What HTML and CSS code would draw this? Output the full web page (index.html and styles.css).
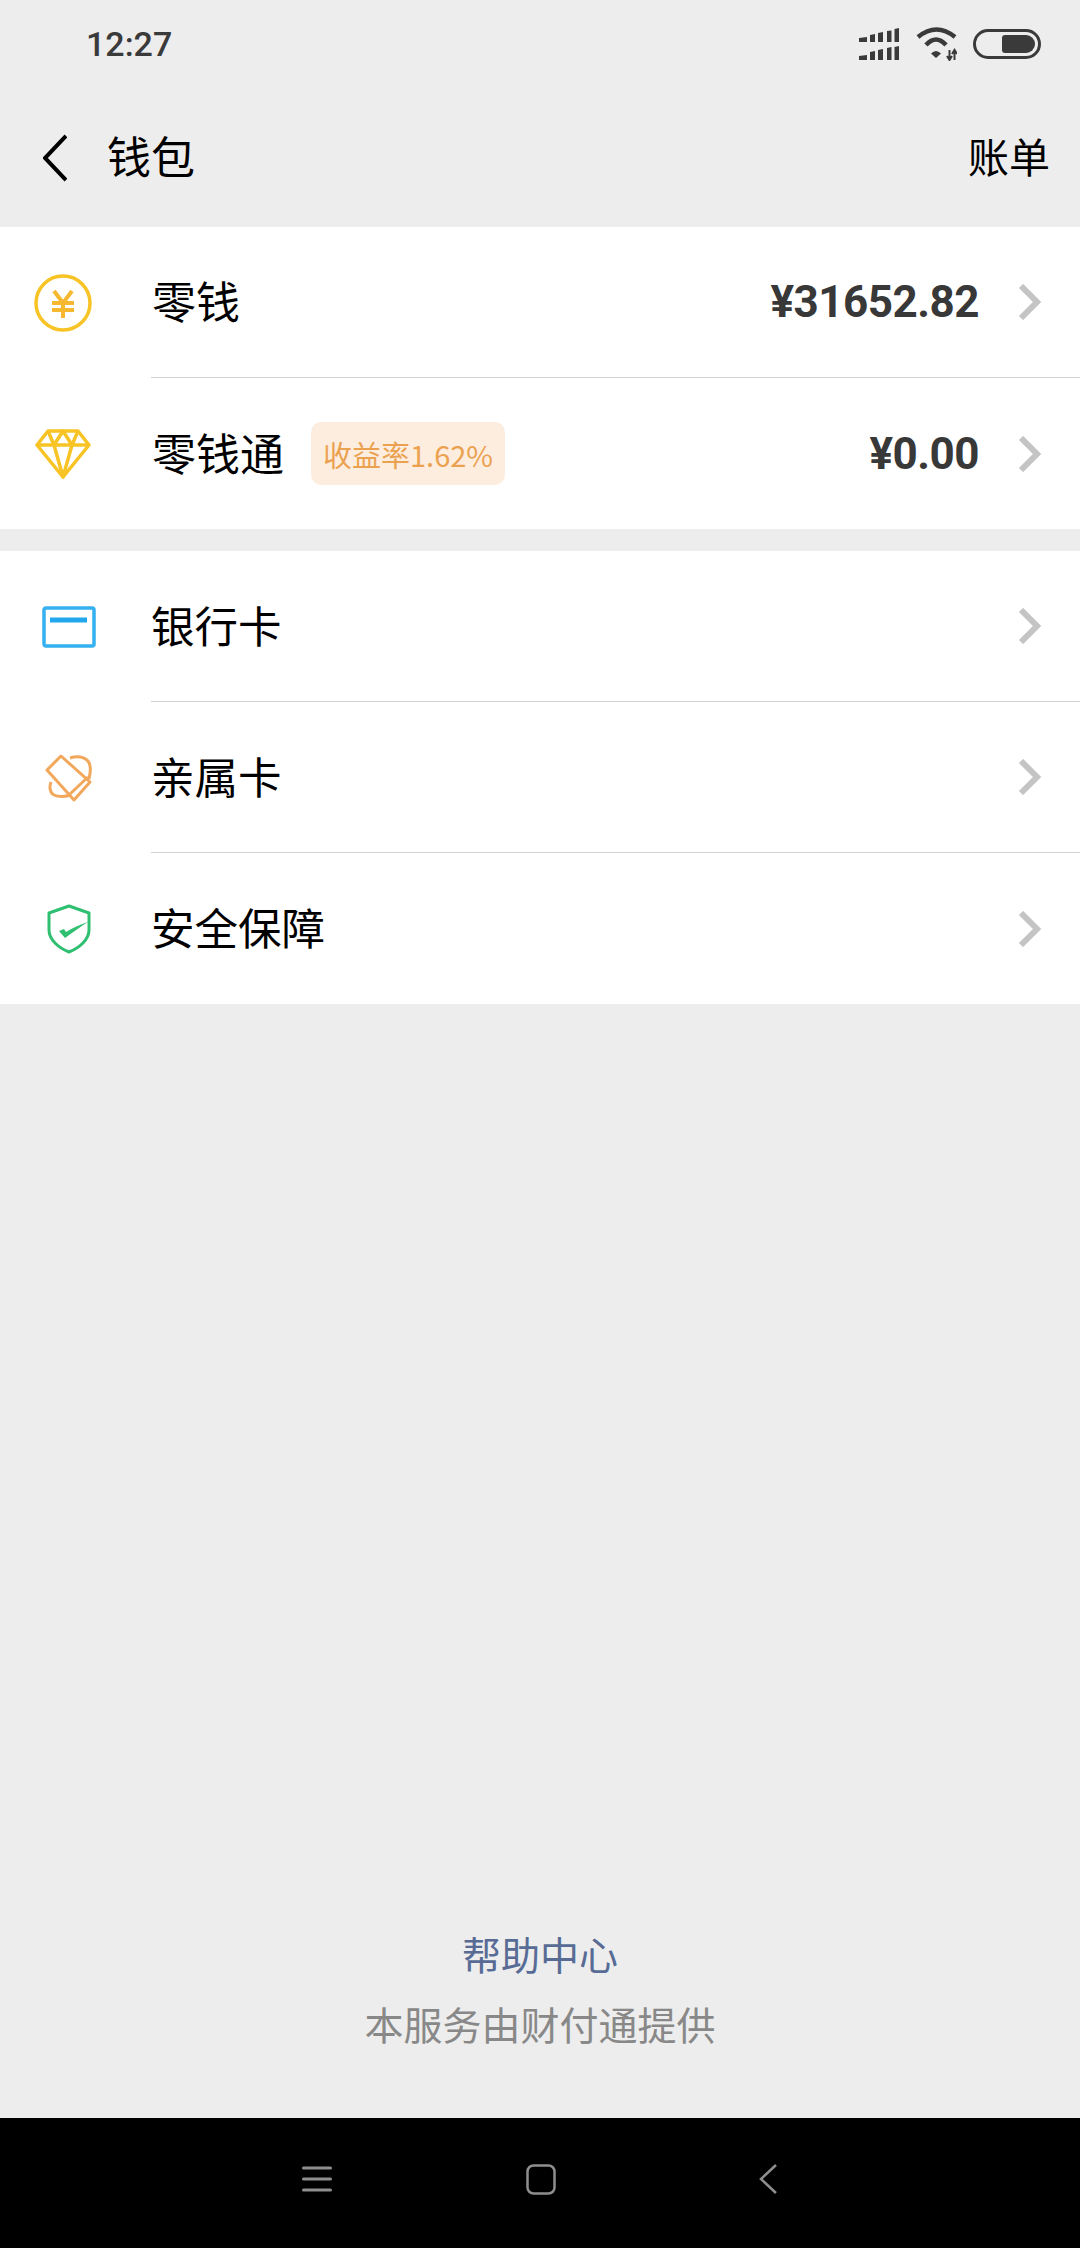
FILE: index.html
```html
<!DOCTYPE html>
<html lang="zh">
<head>
<meta charset="utf-8">
<title>钱包</title>
<link rel="stylesheet" href="styles.css">
</head>
<body>
<div class="page">
	<div class="status">
		<span class="time">12:27</span>
		<div class="status-icons">
			<svg width="40" height="32" viewBox="0 0 40 32" fill="#3a3a3a">
				<path d="M0 10l8-1v5H0zM11 7l5-1v8h-5zM19 5l5-1v10h-5zM28 3l4.500-.5V14H28zM35.500 1L40 0v14h-4.500z"/>
				<path d="M0 28l8-1v5H0zM11 24l5-1v9h-5zM19 22l5-1v11h-5zM28 20l4.500-1v13H28zM35.500 19l4.500-1v14h-4.500z"/>
			</svg>
			<svg width="42" height="34" viewBox="0 0 42 34" fill="none" stroke="#3a3a3a" stroke-width="4.500">
				<path d="M3 10Q21.500-5 40 10"/>
				<path d="M11 18Q21 7 31 18"/>
				<path d="M21 31l-5-4.500q5-5 10 0z" fill="#3a3a3a" stroke="none"/>
				<path d="M34.500 23v10M32 29l2.500 4 2.500-4M39.500 23v10M37 27l2.500-4 2.500 4" stroke-width="2"/>
			</svg>
			<div class="battery"><div class="battery-fill"></div></div>
		</div>
	</div>

	<div class="header">
		<svg class="back" width="24" height="48" viewBox="0 0 24 48" fill="none" stroke="#000" stroke-width="4">
			<path d="M23 2L2 24l21 22"/>
		</svg>
		<span class="header-title">钱包</span>
		<span class="header-action">账单</span>
	</div>

	<div class="group group-money">
		<div class="row">
			<div class="icon">
				<svg width="58" height="58" viewBox="0 0 58 58" fill="none" stroke="#f7c325">
					<circle cx="29" cy="29" r="27" stroke-width="3.500"/>
					<path d="M20 17l9 12 9-12M18 29h22M18 36h22M29 29v15" stroke-width="4" stroke="#f5b82e"/>
				</svg>
			</div>
			<div class="body">
				<span class="label">零钱</span>
				<span class="amount">¥31652.82</span>
				<svg class="chevron" width="24" height="36" viewBox="0 0 24 36" fill="none" stroke="#c4c4c4" stroke-width="6"><path d="M3 2l16 16L3 34"/></svg>
			</div>
		</div>
		<div class="row">
			<div class="icon">
				<svg width="56" height="50" viewBox="0 0 56 50" fill="none" stroke="#f7c325" stroke-width="3.500" stroke-linejoin="round">
					<path d="M13 2h30l11 14-26 32L2 16z"/>
					<path d="M2 16h52M13 2l6 14 9 32 9-32 6-14M19 16l9-14 9 14"/>
				</svg>
			</div>
			<div class="body">
				<span class="label">零钱通</span>
				<span class="badge">收益率1.62%</span>
				<span class="amount">¥0.00</span>
				<svg class="chevron" width="24" height="36" viewBox="0 0 24 36" fill="none" stroke="#c4c4c4" stroke-width="6"><path d="M3 2l16 16L3 34"/></svg>
			</div>
		</div>
	</div>

	<div class="group group-cards">
		<div class="row">
			<div class="icon">
				<svg width="54" height="42" viewBox="0 0 54 42" fill="none">
					<rect x="2" y="2" width="50" height="38" rx="2" stroke="#35b1f0" stroke-width="3.500"/>
					<path d="M8 14h37" stroke="#22a7ee" stroke-width="5"/>
				</svg>
			</div>
			<div class="body">
				<span class="label">银行卡</span>
				<svg class="chevron" width="24" height="36" viewBox="0 0 24 36" fill="none" stroke="#c4c4c4" stroke-width="6"><path d="M3 2l16 16L3 34"/></svg>
			</div>
		</div>
		<div class="row">
			<div class="icon">
				<svg width="48" height="48" viewBox="0 0 48 48" fill="none" stroke="#f2a85c" stroke-width="3" stroke-linejoin="round">
					<path d="M16 2L2 16l27 30 16-18z"/>
					<path d="M25 40l18-17M25 4c10-3 19 0 20 8 1 4 0 8-1 13M6 28c-2 5-1 11 3 13 4 2 11 2 16 0"/>
				</svg>
			</div>
			<div class="body">
				<span class="label">亲属卡</span>
				<svg class="chevron" width="24" height="36" viewBox="0 0 24 36" fill="none" stroke="#c4c4c4" stroke-width="6"><path d="M3 2l16 16L3 34"/></svg>
			</div>
		</div>
		<div class="row">
			<div class="icon">
				<svg width="44" height="50" viewBox="0 0 44 50" fill="none" stroke="#2fbf71" stroke-width="3" stroke-linejoin="round">
					<path d="M22 2l20 7v17c0 10-10 18-20 22C12 44 2 36 2 26V9z"/>
					<path d="M12 27l5-2 2 3c6-4 13-7 22-10-8 5-15 10-23 16z" fill="#2fbf71" stroke="none"/>
				</svg>
			</div>
			<div class="body">
				<span class="label">安全保障</span>
				<svg class="chevron" width="24" height="36" viewBox="0 0 24 36" fill="none" stroke="#c4c4c4" stroke-width="6"><path d="M3 2l16 16L3 34"/></svg>
			</div>
		</div>
	</div>

	<div class="footer">
		<div class="help">帮助中心</div>
		<div class="provider">本服务由财付通提供</div>
	</div>

	<div class="nav">
		<svg width="30" height="26" viewBox="0 0 30 26" stroke="#8e8e8e" stroke-width="3" stroke-linecap="round"><path d="M1.500 2h27M1.500 13h27M1.500 24h27"/></svg>
		<svg width="30" height="31" viewBox="0 0 30 31" fill="none" stroke="#8e8e8e" stroke-width="2.500"><rect x="1.500" y="1.500" width="27" height="28" rx="6"/></svg>
		<svg class="nav-back" width="18" height="30" viewBox="0 0 18 30" fill="none" stroke="#8e8e8e" stroke-width="2.500"><path d="M17 1L2 15l15 14"/></svg>
	</div>
</div>
</body>
</html>
```

FILE: styles.css
```css
* {
	box-sizing: border-box;
}
body {
	margin: 0;
	background: #ededed;
	font-family: "Noto Sans CJK SC", "Noto Sans", sans-serif;
}
.page {
	display: flex;
	flex-direction: column;
	height: 2248px;
}

/* status bar */
.status {
	display: flex;
	align-items: center;
	justify-content: space-between;
	height: 88px;
	padding: 0 39px 0 86px;
}
.time {
	font-family: Roboto, sans-serif;
	font-size: 34px;
	font-weight: 500;
	color: #3a3a3a;
}
.status-icons {
	display: flex;
	align-items: center;
	gap: 16px;
}
.battery {
	display: flex;
	justify-content: flex-end;
	width: 68px;
	height: 30px;
	padding: 3px;
	border: 3px solid #3a3a3a;
	border-radius: 15px;
}
.battery-fill {
	width: 33px;
	height: 100%;
	background: #3a3a3a;
	border-radius: 3px 9px 9px 3px;
}

/* header */
.header {
	display: flex;
	align-items: center;
	height: 139px;
	padding: 0 30px 0 43px;
}
.header-title {
	margin-left: 40px;
	margin-bottom: 5px;
	font-size: 44px;
	color: #000;
}
.header-action {
	margin-left: auto;
	margin-bottom: 5px;
	font-size: 41px;
	color: #000;
}

/* list */
.group {
	background: #fff;
}
.group-cards {
	margin-top: 22px;
}
.row {
	display: flex;
	height: 151px;
}
.icon {
	display: flex;
	align-items: center;
	justify-content: center;
	flex: none;
}
.group-money .icon {
	width: 125px;
	margin-right: 26px;
}
.group-cards .icon {
	width: 138px;
	margin-right: 13px;
}
.body {
	display: flex;
	flex: 1;
	align-items: center;
	padding: 0 38px 0 1px;
	border-bottom: 1px solid #d2d2d2;
}
.row:last-child .body {
	border-bottom: 0;
}
.label {
	margin-bottom: 4px;
	font-size: 44px;
	color: #000;
}
.group-cards .label {
	margin-left: -1px;
	font-size: 43.5px;
}
.badge {
	display: flex;
	align-items: center;
	height: 63px;
	margin-left: 27px;
	padding: 0 12px;
	background: #fdeddf;
	border-radius: 10px;
	font-size: 29px;
	color: #eba250;
}
.amount {
	margin-left: auto;
	font-family: Roboto, sans-serif;
	font-size: 44px;
	font-weight: 700;
	letter-spacing: -0.5px;
	color: #383838;
}
.chevron {
	flex: none;
	margin-left: 39px;
}
.group-cards .chevron {
	margin-left: auto;
}

/* footer */
.footer {
	margin-top: auto;
	padding-bottom: 67px;
	text-align: center;
}
.help {
	font-size: 39px;
	line-height: 56px;
	color: #576b95;
}
.provider {
	margin-top: 14px;
	font-size: 39px;
	line-height: 56px;
	color: #888;
}

/* navigation bar */
.nav {
	display: flex;
	align-items: center;
	gap: 194px;
	height: 130px;
	padding: 0 0 8px 302px;
	background: #000;
}
.nav-back {
	margin-left: 9px;
}
```
